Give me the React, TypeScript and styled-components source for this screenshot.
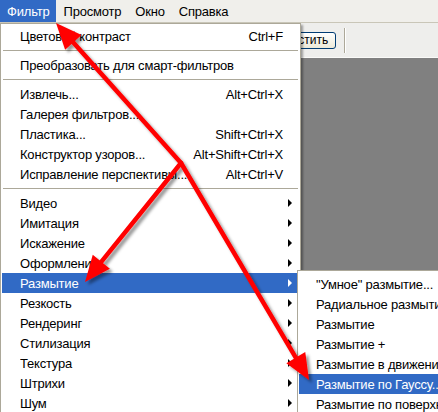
import styled, { createGlobalStyle } from 'styled-components';

const GlobalStyle = createGlobalStyle`
  html, body {
    margin: 0;
    padding: 0;
    background: #808080;
  }
`;

const Page = styled.div`
  position: relative;
  width: 438px;
  height: 412px;
  overflow: hidden;
  display: flex;
  flex-direction: column;
  background: #808080;
  font-family: "Liberation Sans", Arial, sans-serif;
  font-size: 13px;
  letter-spacing: -0.2px;
  color: #000;
`;

const MenuBar = styled.div`
  display: flex;
  align-items: stretch;
  height: 22px;
  background: #f0efeb;
  border-bottom: 1px solid #c9c6b8;
`;

const MenuTitle = styled.div<{ $active?: boolean }>`
  display: flex;
  align-items: center;
  padding: 0 7px;
  background: ${({ $active }) => ($active ? '#316ac5' : 'transparent')};
  color: ${({ $active }) => ($active ? '#fff' : '#000')};
`;

const Toolbar = styled.div`
  display: flex;
  align-items: center;
  gap: 8px;
  height: 34px;
  padding-left: 268px;
  background: #eeeeec;
  border-bottom: 1px solid #fafaf8;
`;

const ToolButton = styled.button`
  height: 17px;
  padding: 0 7px;
  border: 1px solid #003c74;
  border-radius: 3px;
  background: linear-gradient(#ffffff, #ece9d8);
  font-family: "Liberation Sans", Arial, sans-serif;
  font-size: 12px;
  line-height: 13px;
  color: #000;
`;

const ToolSep = styled.div`
  width: 1px;
  height: 25px;
  background: #aca899;
  border-right: 1px solid #fff;
`;

const Canvas = styled.div`
  flex: 1;
  background: #808080;
`;

const Dropdown = styled.div`
  position: absolute;
  top: 23px;
  left: 0;
  z-index: 2;
  box-sizing: border-box;
  width: 301px;
  height: 400px;
  padding: 2px 1px;
  background: #fff;
  border: 1px solid #aca899;
  box-shadow: 2px 2px 2px rgba(0, 0, 0, 0.35);
`;

const Item = styled.div<{ $active?: boolean }>`
  position: relative;
  display: flex;
  align-items: center;
  height: 20px;
  padding-left: 18px;
  white-space: nowrap;
  background: ${({ $active }) => ($active ? '#316ac5' : 'transparent')};
  color: ${({ $active }) => ($active ? '#fff' : '#000')};
`;

const Label = styled.span`
  flex: 1;
  overflow: hidden;
`;

const Shortcut = styled.span`
  text-align: right;
`;

const ArrowCell = styled.span`
  width: 16px;
  flex: none;
  display: flex;
  align-items: center;
`;

const SubArrow = styled.span<{ $light?: boolean }>`
  margin-left: 5px;
  width: 0;
  height: 0;
  border-top: 4px solid transparent;
  border-bottom: 4px solid transparent;
  border-left: 4px solid ${({ $light }) => ($light ? '#fff' : '#000')};
`;

const Separator = styled.div`
  height: 9px;
  display: flex;
  align-items: center;
  padding: 0 1px;

  &::after {
    content: '';
    flex: 1;
    border-top: 1px solid #aca899;
  }
`;

const Submenu = styled.div`
  position: absolute;
  top: -3px;
  left: calc(100% - 2px);
  z-index: 3;
  box-sizing: border-box;
  width: 190px;
  padding: 3px 1px;
  background: #fff;
  border: 1px solid #aca899;
  box-shadow: 2px 2px 2px rgba(0, 0, 0, 0.35);
`;

const SubItem = styled(Item)`
  padding-left: 17px;
`;

const Overlay = styled.svg`
  position: absolute;
  top: 0;
  left: 0;
  z-index: 5;
  pointer-events: none;
`;

type Pt = [number, number];

const head = (tip: Pt, from: Pt, len = 26, half = 11) => {
  const dx = tip[0] - from[0];
  const dy = tip[1] - from[1];
  const d = Math.hypot(dx, dy);
  const ux = dx / d;
  const uy = dy / d;
  const bx = tip[0] - ux * len;
  const by = tip[1] - uy * len;
  return {
    base: [bx + ux * 2, by + uy * 2] as Pt,
    points: `${tip[0]},${tip[1]} ${bx - uy * half},${by + ux * half} ${bx + uy * half},${by - ux * half}`,
  };
};

const junction: Pt = [181, 163];
const tips: Pt[] = [
  [56, 23],
  [85, 282],
  [309, 380],
];

const Arrows = () => (
  <Overlay width={438} height={412} viewBox="0 0 438 412">
    <defs>
      <filter id="shade" x="-20%" y="-20%" width="140%" height="140%">
        <feDropShadow dx="3" dy="3" stdDeviation="1.5" floodColor="#000" floodOpacity="0.4" />
      </filter>
    </defs>
    <g filter="url(#shade)">
      {tips.map((t, i) => {
        const h = head(t, junction);
        return (
          <g key={i}>
            <line
              x1={junction[0]}
              y1={junction[1]}
              x2={h.base[0]}
              y2={h.base[1]}
              stroke="#f00"
              strokeWidth={4.5}
              strokeLinecap="round"
            />
            <polygon points={h.points} fill="#f00" />
          </g>
        );
      })}
    </g>
  </Overlay>
);

type Entry = { label: string; shortcut?: string; sub?: boolean } | 'sep';

const entries: Entry[] = [
  { label: 'Цветовой контраст', shortcut: 'Ctrl+F' },
  'sep',
  { label: 'Преобразовать для смарт-фильтров' },
  'sep',
  { label: 'Извлечь...', shortcut: 'Alt+Ctrl+X' },
  { label: 'Галерея фильтров...' },
  { label: 'Пластика...', shortcut: 'Shift+Ctrl+X' },
  { label: 'Конструктор узоров...', shortcut: 'Alt+Shift+Ctrl+X' },
  { label: 'Исправление перспективы...', shortcut: 'Alt+Ctrl+V' },
  'sep',
  { label: 'Видео', sub: true },
  { label: 'Имитация', sub: true },
  { label: 'Искажение', sub: true },
  { label: 'Оформление', sub: true },
  { label: 'Размытие', sub: true },
  { label: 'Резкость', sub: true },
  { label: 'Рендеринг', sub: true },
  { label: 'Стилизация', sub: true },
  { label: 'Текстура', sub: true },
  { label: 'Штрихи', sub: true },
  { label: 'Шум', sub: true },
];

const blurItems = [
  '"Умное" размытие...',
  'Радиальное размытие...',
  'Размытие',
  'Размытие +',
  'Размытие в движении...',
  'Размытие по Гауссу...',
  'Размытие по поверхности...',
];

const App = () => {
  return (
    <Page>
      <GlobalStyle />
      <MenuBar>
        <MenuTitle $active>Фильтр</MenuTitle>
        <MenuTitle>Просмотр</MenuTitle>
        <MenuTitle>Окно</MenuTitle>
        <MenuTitle>Справка</MenuTitle>
      </MenuBar>
      <Toolbar>
        <ToolButton>Очистить</ToolButton>
        <ToolSep />
      </Toolbar>
      <Canvas />

      <Dropdown>
        {entries.map((e, i) => {
          if (e === 'sep') return <Separator key={i} />;
          const active = e.label === 'Размытие';
          return (
            <Item key={i} $active={active}>
              <Label>{e.label}</Label>
              {e.shortcut && <Shortcut>{e.shortcut}</Shortcut>}
              <ArrowCell>{e.sub && <SubArrow $light={active} />}</ArrowCell>
              {active && (
                <Submenu>
                  {blurItems.map((b) => (
                    <SubItem key={b} $active={b === 'Размытие по Гауссу...'}>
                      <Label>{b}</Label>
                    </SubItem>
                  ))}
                </Submenu>
              )}
            </Item>
          );
        })}
      </Dropdown>

      <Arrows />
    </Page>
  );
};

export default App;
